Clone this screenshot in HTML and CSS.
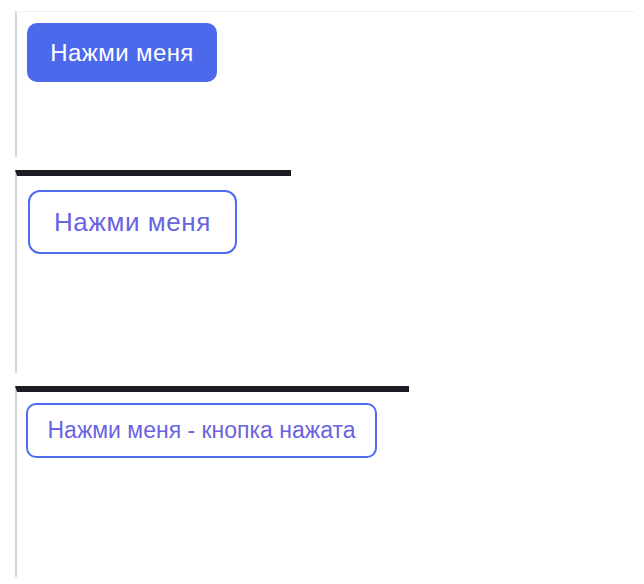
FILE: index.html
```html
<!DOCTYPE html>
<html lang="ru">
<head>
<meta charset="utf-8">
<link rel="stylesheet" href="styles.css">
</head>
<body>
  <section class="panel panel-first">
    <button class="btn btn-primary">Нажми меня</button>
  </section>
  <section class="panel panel-second">
    <button class="btn btn-outline btn-large">Нажми меня</button>
  </section>
  <section class="panel panel-third">
    <button class="btn btn-outline btn-small">Нажми меня - кнопка нажата</button>
  </section>
</body>
</html>
```

FILE: styles.css
```css
html, body {
  margin: 0;
  padding: 0;
  background: #ffffff;
}
body {
  font-family: "Liberation Sans", Arial, sans-serif;
  padding-top: 11px;
}
.panel {
  margin-left: 15px;
  border-left: 2px solid #d6d6de;
  box-sizing: border-box;
}
.panel-first {
  border-top: 1px solid #f1f1f4;
  height: 146px;
  padding: 11px 0 0 10px;
  width: 620px;
}
.panel-second {
  margin-top: 13px;
  border-top: 6px solid #1c1b24;
  width: 276px;
  height: 203px;
  padding: 14px 0 0 11px;
}
.panel-third {
  margin-top: 13px;
  border-top: 6px solid #1c1b24;
  width: 394px;
  height: 191px;
  padding: 11px 0 0 9px;
}
.btn {
  font-family: "Liberation Sans", Arial, sans-serif;
  box-sizing: border-box;
  display: block;
  white-space: nowrap;
  cursor: pointer;
  padding: 0;
  text-align: center;
}
.btn-primary {
  background: #4b69ea;
  color: #ffffff;
  border: none;
  border-radius: 10px;
  font-size: 24px;
  letter-spacing: 0.4px;
  height: 59px;
  width: 190px;
}
.btn-outline {
  background: #ffffff;
  color: #6a63df;
  border: 2px solid #4d6cf0;
}
.btn-large {
  font-size: 26px;
  letter-spacing: 0.6px;
  height: 64px;
  width: 209px;
  border-radius: 12px;
}
.btn-small {
  font-size: 23px;
  letter-spacing: 0;
  height: 55px;
  width: 351px;
  border-radius: 10px;
}
```
